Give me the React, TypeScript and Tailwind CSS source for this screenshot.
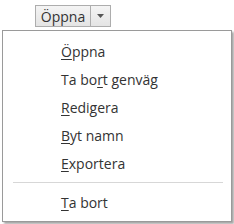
const items: { pre: string; acc: string; post: string }[] = [
  { pre: '', acc: 'Ö', post: 'ppna' },
  { pre: 'Ta bo', acc: 'r', post: 't genväg' },
  { pre: '', acc: 'R', post: 'edigera' },
  { pre: '', acc: 'B', post: 'yt namn' },
  { pre: '', acc: 'E', post: 'xportera' },
]

const MenuItem = ({ pre, acc, post }: { pre: string; acc: string; post: string }) => (
  <div className="flex h-[28px] items-center pl-[58px] text-[14px] text-[#333]">
    <span>
      {pre}
      <span className="underline underline-offset-2 decoration-1">{acc}</span>
      {post}
    </span>
  </div>
)

export default function App() {
  return (
    <div
      className="h-[224px] w-[234px] overflow-hidden bg-white"
      style={{ fontFamily: '"Open Sans", "Noto Sans", sans-serif' }}
    >
      <div className="ml-[35px] pt-[5px] flex h-[27px]">
        <button className="flex h-[22px] w-[56px] items-center justify-center border border-[#adadad] bg-gradient-to-b from-[#f4f4f4] to-[#e4e4e4] text-[14px] text-[#333]">
          Öppna
        </button>
        <button className="-ml-px flex h-[22px] w-[21px] items-center justify-center border border-[#adadad] bg-gradient-to-b from-[#f4f4f4] to-[#e4e4e4]">
          <svg width="7" height="4" viewBox="0 0 7 4">
            <path d="M0 0h7L3.5 4z" fill="#555" />
          </svg>
        </button>
      </div>
      <div className="ml-[2px] mt-[3px] h-[192px] w-[230px] border border-[#9a9a9a] bg-white pt-[6px] shadow-[2px_2px_2px_rgba(0,0,0,0.35)]">
        {items.map((it) => (
          <MenuItem key={it.pre + it.acc} pre={it.pre} acc={it.acc} post={it.post} />
        ))}
        <div className="my-[5px] ml-[10px] mr-[8px] h-px bg-[#d7d7d7]" />
        <MenuItem pre="" acc="T" post="a bort" />
      </div>
    </div>
  )
}
